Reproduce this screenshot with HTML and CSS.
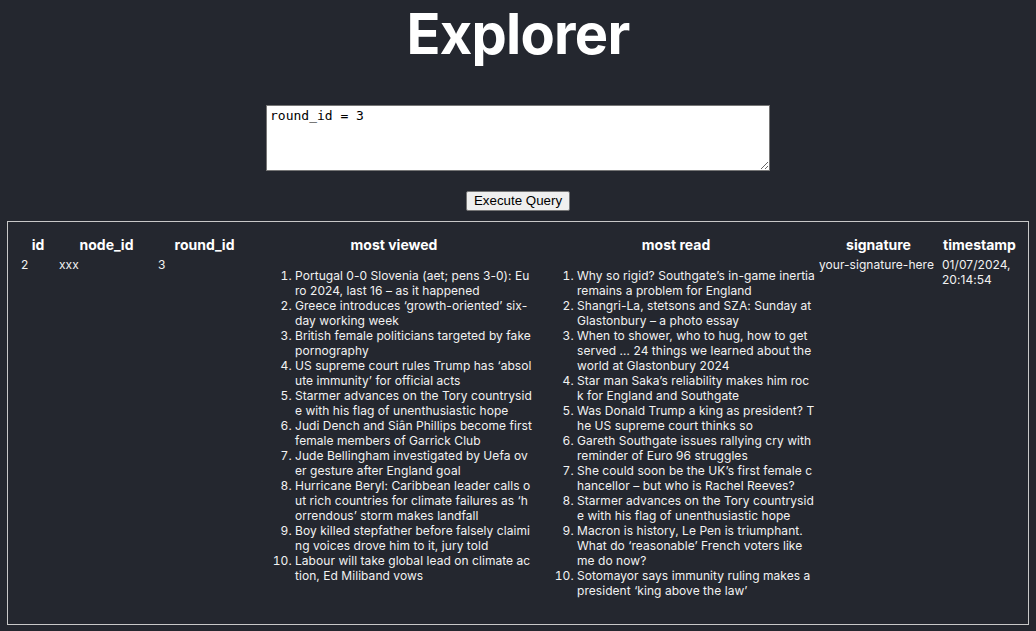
FILE: index.html
```html
<!DOCTYPE html>
<html lang="en">
<head>
<meta charset="utf-8">
<title>Explorer</title>
<link rel="stylesheet" href="styles.css">
</head>
<body>
<main class="page">
  <h1 class="title">Explorer</h1>
  <form class="query">
    <textarea class="query-input">round_id = 3</textarea>
    <button type="button" class="query-btn">Execute Query</button>
  </form>
  <section class="results">
    <table class="grid">
      <thead>
        <tr>
          <th class="c-id">id</th>
          <th class="c-node">node_id</th>
          <th class="c-round">round_id</th>
          <th class="c-list">most viewed</th>
          <th class="c-list">most read</th>
          <th class="c-sig">signature</th>
          <th class="c-ts">timestamp</th>
        </tr>
      </thead>
      <tbody>
        <tr>
          <td>2</td>
          <td>xxx</td>
          <td>3</td>
          <td class="list-cell">
            <ol class="list">
              <li>Portugal 0-0 Slovenia (aet; pens 3-0): Euro 2024, last 16 – as it happened</li>
              <li>Greece introduces ‘growth-oriented’ six-day working week</li>
              <li>British female politicians targeted by fake pornography</li>
              <li>US supreme court rules Trump has ‘absolute immunity’ for official acts</li>
              <li>Starmer advances on the Tory countryside with his flag of unenthusiastic hope</li>
              <li>Judi Dench and Siân Phillips become first female members of Garrick Club</li>
              <li>Jude Bellingham investigated by Uefa over gesture after England goal</li>
              <li>Hurricane Beryl: Caribbean leader calls out rich countries for climate failures as ‘horrendous’ storm makes landfall</li>
              <li>Boy killed stepfather before falsely claiming voices drove him to it, jury told</li>
              <li>Labour will take global lead on climate action, Ed Miliband vows</li>
            </ol>
          </td>
          <td class="list-cell">
            <ol class="list">
              <li>Why so rigid? Southgate’s in-game inertia remains a problem for England</li>
              <li>Shangri-La, stetsons and SZA: Sunday at Glastonbury – a photo essay</li>
              <li>When to shower, who to hug, how to get served … 24 things we learned about the world at Glastonbury 2024</li>
              <li>Star man Saka’s reliability makes him rock for England and Southgate</li>
              <li>Was Donald Trump a king as president? The US supreme court thinks so</li>
              <li>Gareth Southgate issues rallying cry with reminder of Euro 96 struggles</li>
              <li>She could soon be the UK’s first female chancellor – but who is Rachel Reeves?</li>
              <li>Starmer advances on the Tory countryside with his flag of unenthusiastic hope</li>
              <li>Macron is history, Le Pen is triumphant. What do ‘reasonable’ French voters like me do now?</li>
              <li>Sotomayor says immunity ruling makes a president ‘king above the law’</li>
            </ol>
          </td>
          <td>your-signature-here</td>
          <td>01/07/2024, 20:14:54</td>
        </tr>
      </tbody>
    </table>
  </section>
</main>
</body>
</html>
```

FILE: styles.css
```css
html, body {
  margin: 0;
  padding: 0;
  background: #24272f;
}

.page {
  color: #ffffff;
  font-family: Inter, "Noto Sans", sans-serif;
  display: flex;
  flex-direction: column;
  align-items: center;
}

.title {
  margin: 0;
  font-size: 56px;
  font-weight: 700;
  line-height: 68px;
  letter-spacing: -0.75px;
}

.query {
  margin-top: 37px;
  display: flex;
  flex-direction: column;
  align-items: center;
}

.query-input {
  box-sizing: border-box;
  width: 504px;
  height: 66px;
  margin: 0;
  padding: 2px 3px;
  border: 1px solid #767676;
  border-radius: 0;
  background: #ffffff;
  color: #000000;
  font-family: "DejaVu Sans Mono", monospace;
  font-size: 13px;
  line-height: 16px;
  resize: vertical;
}

.query-btn {
  margin-top: 20px;
  box-sizing: border-box;
  height: 20px;
  padding: 0 7px;
  border: 1px solid #767676;
  border-radius: 2px;
  background: #efefef;
  color: #000000;
  font-family: "Liberation Sans", Arial, sans-serif;
  font-size: 13.33px;
  line-height: 16px;
}

.results {
  box-sizing: border-box;
  align-self: stretch;
  margin: 10px 7px 0 7px;
  border: 1px solid #c8c8c8;
  padding: 11px 8px 11px 10px;
}

.grid {
  border-collapse: separate;
  border-spacing: 2px;
  table-layout: fixed;
  width: 1002px;
  font-size: 12px;
  line-height: 15px;
}

.grid th {
  font-size: 14px;
  font-weight: 700;
  line-height: 17px;
  padding: 1px;
  text-align: center;
  vertical-align: top;
}

.grid td {
  padding: 1px;
  vertical-align: top;
  text-align: left;
  color: #f2f2f2;
  letter-spacing: 0.05px;
}

.c-id { width: 34px; }
.c-node { width: 95px; }
.c-round { width: 93px; }
.c-list { width: 278px; }
.c-sig { width: 119px; }
.c-ts { width: 75px; }

.list {
  margin: 11px 0 12px 0;
  padding-left: 40px;
  word-break: break-all;
}
```
